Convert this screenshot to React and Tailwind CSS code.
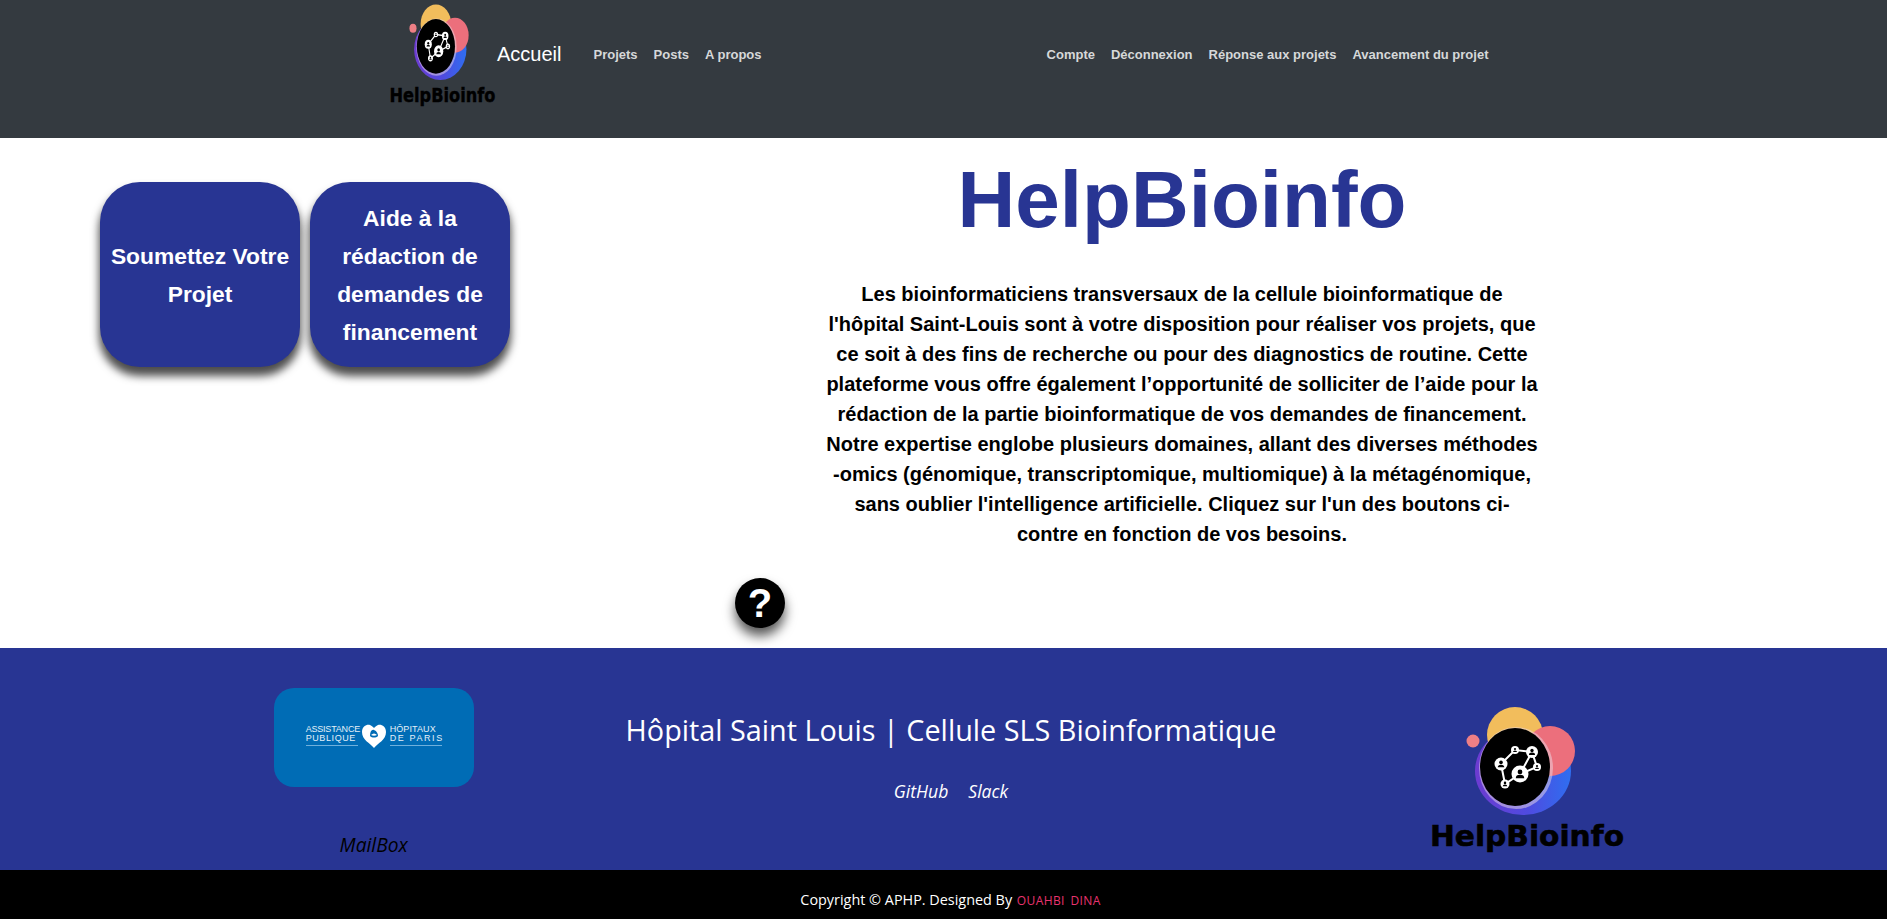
import React from "react";

const Logo = ({ className }) => (
  <svg viewBox="29 14 198 150" preserveAspectRatio="none" className={className}>
    <defs>
      <linearGradient id="ring" x1="0" y1="0" x2="1" y2="0">
        <stop offset="0" stopColor="#6d3bd1" />
        <stop offset="0.55" stopColor="#4f4be0" />
        <stop offset="1" stopColor="#2f6ef0" />
      </linearGradient>
    </defs>
    <ellipse cx="123" cy="80" rx="48" ry="44" fill="url(#ring)" />
    <circle cx="115" cy="44" r="28" fill="#f2bd5c" />
    <circle cx="150" cy="60" r="25" fill="#ec6f7c" />
    <circle cx="73" cy="50" r="6.5" fill="#ee7f85" />
    <ellipse cx="116" cy="77" rx="37" ry="41" fill="#e9d9e6" opacity="0.5" />
    <ellipse cx="115" cy="76" rx="35" ry="39" fill="#000" />
    <g stroke="#fff" strokeWidth="2" fill="none">
      <path d="M101 73 L115 59 L132 61 L120 83 L105 93 L101 73" />
      <path d="M132 61 L137 76 L120 83" />
    </g>
    {[
      [115, 59, 4],
      [132, 61, 6],
      [101, 73, 6.5],
      [137, 76, 4],
      [120, 83, 8.5],
      [105, 93, 4.5],
    ].map(([x, y, r]) => (
      <g key={x}>
        <circle cx={x} cy={y} r={r} fill="#fff" />
        <circle cx={x} cy={y - r * 0.25} r={r * 0.28} fill="#000" />
        <path d={`M${x - r * 0.5} ${y + r * 0.5} a${r * 0.5} ${r * 0.4} 0 0 1 ${r} 0z`} fill="#000" />
      </g>
    ))}
    <text x="30" y="155" textLength="194" lengthAdjust="spacingAndGlyphs" fontFamily="'DejaVu Sans', sans-serif" fontWeight="700" fontSize="29" fill="#000" stroke="#000" strokeWidth="0.6">
      HelpBioinfo
    </text>
  </svg>
);

const Aphp = () => (
  <div className="w-[200px] h-[99px] rounded-[20px] bg-[#006cb5] flex items-center justify-center gap-[3px] text-[#e4f0f8] text-[9px] leading-[9px] whitespace-nowrap pb-[4px] font-['Liberation_Sans',sans-serif]">
    <div className="border-b border-[#6fb0dc] pb-[2px] w-[52px]">
      <div className="tracking-[-0.2px]">ASSISTANCE</div>
      <div className="tracking-[0.6px]">PUBLIQUE</div>
    </div>
    <svg viewBox="0 0 26 26" className="w-[26px] h-[26px]">
      <path d="M13 25 C9 20 1 17 1 9 C1 3 6 1 9 2 C11 3 12 4 13 5 C14 4 15 3 17 2 C20 1 25 3 25 9 C25 17 17 20 13 25z" fill="#fff" />
      <path d="M9 13 C9 8 11 6 13 7 C16 8 17 11 17 13 C15 15 11 15 9 13z" fill="#006cb5" />
      <path d="M10 12 C12 10 14 10 16 12 C14 13 12 13 10 12z" fill="#fff" />
    </svg>
    <div className="border-b border-[#6fb0dc] pb-[2px] w-[52px]">
      <div className="tracking-[0.1px]">HÔPITAUX</div>
      <div className="tracking-[1.6px]">DE PARIS</div>
    </div>
  </div>
);

const BigBtn = ({ children }) => (
  <a className="w-[200px] h-[185px] rounded-[40px] bg-[#283593] flex items-center justify-center text-center text-white text-[22.8px] leading-[38px] font-bold px-2 shadow-[0_8px_8px_1px_#000000b3]">
    <span>{children}</span>
  </a>
);

export default function App() {
  return (
    <div className="font-['Liberation_Sans',Arial,sans-serif]">
      <nav className="h-[138px] bg-[#343a40] flex items-start text-[13px] font-bold text-[#d6d8d9]">
        <Logo className="w-[108px] h-[105px] ml-[389px] mt-[3px]" />
        <a className="mt-[42px] text-[20px] leading-[24px] font-normal text-white">Accueil</a>
        <ul className="flex gap-4 ml-[32px] mt-[47px] leading-[15px]">
          <li>Projets</li>
          <li>Posts</li>
          <li>A propos</li>
        </ul>
        <ul className="flex gap-4 ml-[285px] mt-[47px] leading-[15px]">
          <li>Compte</li>
          <li>Déconnexion</li>
          <li>Réponse aux projets</li>
          <li>Avancement du projet</li>
        </ul>
      </nav>

      <main className="relative h-[510px] bg-white flex items-start">
        <div className="flex gap-[10px] ml-[100px] mt-[44px]">
          <BigBtn>Soumettez Votre Projet</BigBtn>
          <BigBtn>Aide à la rédaction de demandes de financement</BigBtn>
        </div>
        <div className="ml-[314px] w-[716px] text-center">
          <h1 className="mt-[12px] text-[80px] leading-[100px] font-bold text-[#283593]">HelpBioinfo</h1>
          <p className="mt-[29px] text-[20px] leading-[30px] font-bold text-black">
            Les bioinformaticiens transversaux de la cellule bioinformatique de l'hôpital Saint-Louis sont à votre disposition pour réaliser vos projets, que ce soit à des fins de recherche ou pour des diagnostics de routine. Cette plateforme vous offre également l’opportunité de solliciter de l’aide pour la rédaction de la partie bioinformatique de vos demandes de financement. Notre expertise englobe plusieurs domaines, allant des diverses méthodes -omics (génomique, transcriptomique, multiomique) à la métagénomique, sans oublier l'intelligence artificielle. Cliquez sur l'un des boutons ci-contre en fonction de vos besoins.
          </p>
        </div>
        <button className="absolute left-[735px] top-[440px] w-[50px] h-[50px] rounded-full bg-black text-white text-[40px] leading-[50px] font-bold shadow-[0_8px_12px_#000000aa]">?</button>
      </main>

      <footer className="h-[222px] bg-[#283593] grid grid-cols-3 w-full pl-[85px] pr-[70px] font-['Open_Sans',sans-serif]">
        <div className="flex flex-col items-center pt-[40px]">
          <Aphp />
          <a className="mt-[45px] text-[19.2px] leading-[26px] italic text-black">MailBox</a>
        </div>
        <div className="flex flex-col items-center pt-[63px]">
          <h2 className="text-[28.8px] leading-[38px] text-white whitespace-nowrap">Hôpital Saint Louis | Cellule SLS Bioinformatique</h2>
          <div className="flex gap-5 mt-[30px] text-[17.6px] leading-[24px] italic text-white">
            <a>GitHub</a>
            <a>Slack</a>
          </div>
        </div>
        <div className="flex justify-center pt-[57px]">
          <Logo className="w-[198px] h-[150px]" />
        </div>
      </footer>

      <div className="h-[49px] pt-[11px] pl-[14px] bg-black flex items-center justify-center text-[14.4px] text-white font-['Open_Sans',sans-serif]">
        <span>Copyright © APHP. Designed By <a className="ml-[1px] text-[12px] text-[#e8336f] tracking-[0.4px] [word-spacing:2px]">OUAHBI DINA</a></span>
      </div>
    </div>
  );
}
